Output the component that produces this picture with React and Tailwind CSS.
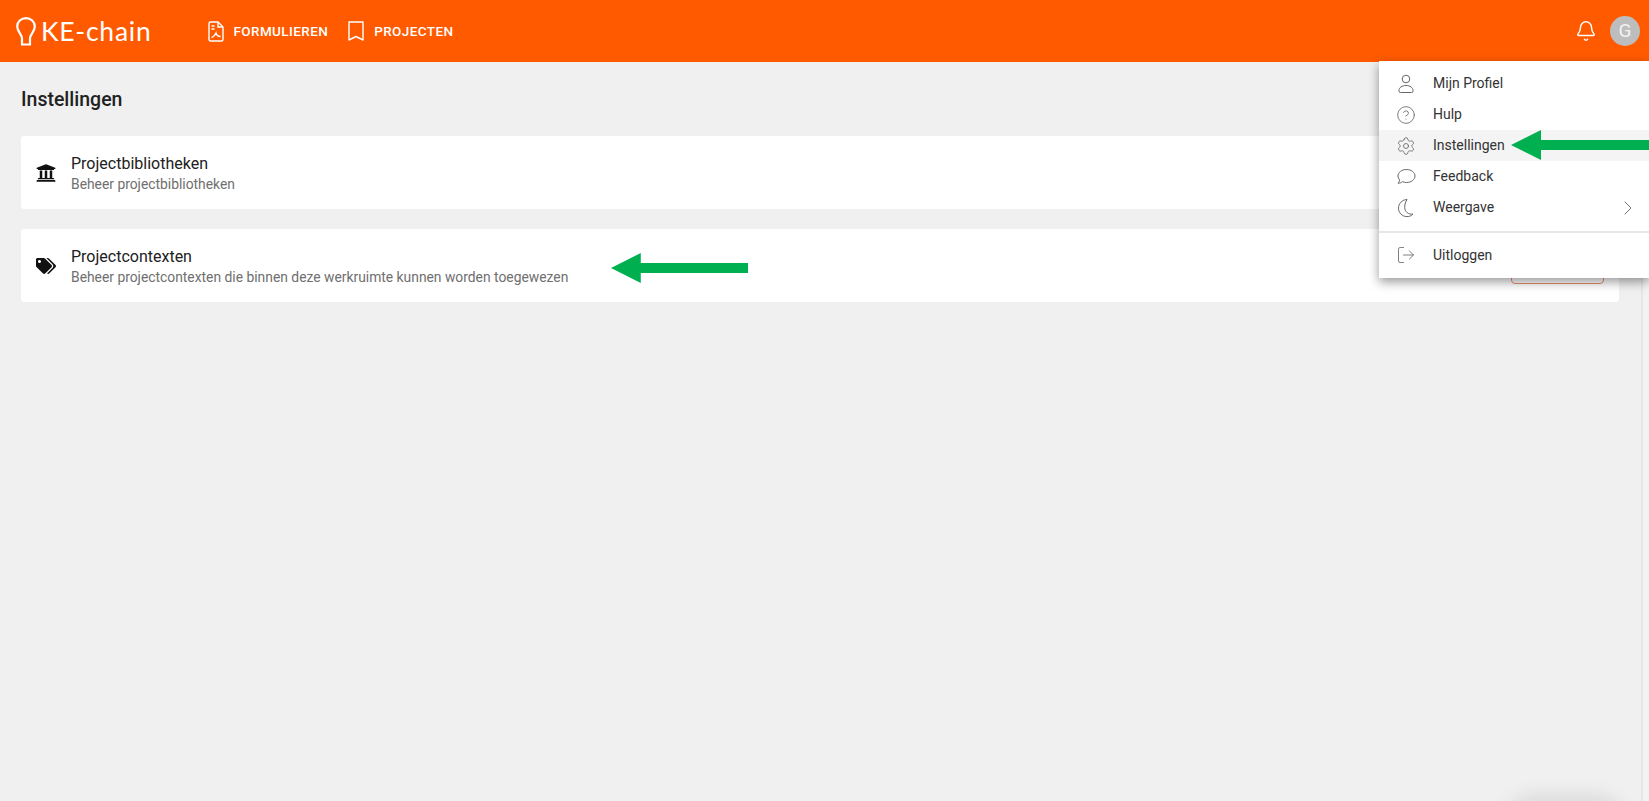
import { Bell, ChevronRight, CircleHelp, LogOut, Settings } from "lucide-react";
import { FaTags, FaUniversity } from "react-icons/fa";

function UserIcon({ className }) {
  return (
    <svg viewBox="0 0 20 20" fill="none" stroke="currentColor" strokeWidth="1" className={className}>
      <circle cx="10" cy="5" r="3.800" />
      <path d="M3 16.500c0-3 3-5 7-5s7 2 7 5v.5a1.500 1.500 0 0 1-1.500 1.500h-11A1.500 1.500 0 0 1 3 17z" />
    </svg>
  );
}

function BubbleIcon({ className }) {
  return (
    <svg viewBox="0 0 20 20" fill="none" stroke="currentColor" strokeWidth="1" className={className}>
      <path d="M10.500 2.500c4.700 0 8.500 2.900 8.500 6.500s-3.800 6.500-8.500 6.500c-1.500 0-2.900-.3-4-.8-1 .9-2.500 1.500-4.500 1.500 1-1 1.500-2 1.700-3.100C2.800 11.900 2 10.500 2 9c0-3.600 3.800-6.500 8.500-6.500z" />
    </svg>
  );
}

function MoonIcon({ className }) {
  return (
    <svg viewBox="0 0 20 20" fill="none" stroke="currentColor" strokeWidth="1" className={className}>
      <path d="M11 1.500C6.200 1.700 2.500 5.500 2.500 10.200s3.800 8.400 8.500 8.400c2.400 0 4.500-.9 6-2.500-4.500.6-8.300-2.300-8.300-6.800 0-3.100 1-5.800 2.300-7.800z" />
    </svg>
  );
}

const menuItems = [
  { label: "Mijn Profiel", icon: UserIcon },
  { label: "Hulp", icon: CircleHelp },
  { label: "Instellingen", icon: Settings, active: true },
  { label: "Feedback", icon: BubbleIcon },
  { label: "Weergave", icon: MoonIcon, chevron: true },
];

function Logo() {
  return (
    <div className="flex items-center text-white">
      <svg width="20" height="29" viewBox="0 0 20 29" fill="none" stroke="currentColor" strokeWidth="2.2" className="mr-[5px]">
        <path d="M6 27.500h8v-6c0-2 1-3.500 2.300-5.500 1.300-2 2.500-3.800 2.500-6.700C18.800 4.500 14.900 1.200 10 1.200S1.200 4.500 1.200 9.300c0 2.900 1.200 4.700 2.500 6.700C5 18 6 19.500 6 21.500z" />
      </svg>
      <span className="font-['Lato',sans-serif] text-[26.500px] leading-none tracking-[0.75px]">KE-chain</span>
    </div>
  );
}

function PdfIcon() {
  return (
    <svg width="16" height="21" viewBox="0 0 16 21" fill="none" stroke="currentColor" strokeWidth="1.400">
      <path d="M2.500 1h7.500l5 5v12.500a1.500 1.500 0 0 1-1.500 1.500h-11a1.500 1.500 0 0 1-1.500-1.500v-16a1.500 1.500 0 0 1 1.500-1.500z" />
      <path d="M10 1v5h5M3.500 5h3M3.500 8h3M3.500 16.500c2.500-.5 3.500-2.500 4.500-4.500.5 2 2 3.500 4.500 3.500" />
    </svg>
  );
}

function BookmarkIcon() {
  return (
    <svg width="16" height="20" viewBox="0 0 16 20" fill="none" stroke="currentColor" strokeWidth="1.400">
      <path d="M1 1h14v18l-7-3.500L1 19z" strokeLinejoin="round" />
    </svg>
  );
}

function SettingCard({ icon: Icon, title, text }) {
  return (
    <div className="flex h-[73px] items-center rounded-[3px] bg-white pl-[15px] pr-[15px]">
      <div className="flex w-[35px] shrink-0 items-center">
        <Icon className="h-[20px] w-[20px] text-[#111111]" />
      </div>
      <div className="min-w-0 flex-1">
        <div className="text-[16px] leading-[22px] text-[#212121]">{title}</div>
        <div className="text-[13.850px] leading-[18px] text-[#6f6f6f]">{text}</div>
      </div>
      <div className="h-[36px] w-[93px] shrink-0 rounded-[4px] border border-[#e8906a]" />
    </div>
  );
}

function GreenArrow({ className }) {
  return (
    <svg viewBox="0 0 138 30" className={className} preserveAspectRatio="none">
      <path d="M0 15 30 0v10h108v10H30v10z" fill="#00b050" />
    </svg>
  );
}

function UserMenu() {
  return (
    <div className="absolute left-[1379px] top-[61px] w-[270px] bg-white py-[7px] shadow-[0_4px_10px_rgba(0,0,0,0.4)]">
      {menuItems.map(({ label, icon: Icon, active, chevron }) => (
        <div key={label} className={`flex h-[31px] items-center pl-[17px] pr-[9px] ${active ? "bg-[#f4f4f4]" : ""}`}>
          <Icon className="h-[20px] w-[20px] text-[#666666]" strokeWidth={1} />
          <span className="ml-[17px] flex-1 text-[14px] text-[#333333]">{label}</span>
          {chevron && <ChevronRight className="h-[24px] w-[24px] text-[#777777]" strokeWidth={1} />}
        </div>
      ))}
      <div className="mt-[8px] h-[1.500px] bg-[#e6e6e6]" />
      <div className="mt-[7px] flex h-[31px] items-center pl-[17px]">
        <LogOut className="h-[20px] w-[20px] text-[#666666]" strokeWidth={1} />
        <span className="ml-[17px] text-[14px] text-[#333333]">Uitloggen</span>
      </div>
    </div>
  );
}

export default function App() {
  return (
    <div className="relative flex h-[801px] w-full flex-col overflow-hidden bg-[#f0f0f0] font-['Roboto',sans-serif]">
      <header className="flex h-[62px] shrink-0 items-center bg-[#ff5a00] pl-[16px] pr-[9px] text-white">
        <Logo />
        <nav className="ml-[57px] flex items-center gap-[20px]">
          <div className="flex items-center gap-[9px]">
            <PdfIcon />
            <span className="text-[13.500px] font-medium tracking-[0.4px]">FORMULIEREN</span>
          </div>
          <div className="flex items-center gap-[10px]">
            <BookmarkIcon />
            <span className="text-[13.500px] font-medium tracking-[0.4px]">PROJECTEN</span>
          </div>
        </nav>
        <div className="ml-auto flex items-center gap-[13px]">
          <Bell className="h-[22px] w-[22px]" strokeWidth={1.6} />
          <div className="flex h-[30px] w-[30px] items-center justify-center rounded-full bg-[#bdbdbd] text-[19px] text-[#f2f2f2]">G</div>
        </div>
      </header>

      <div className="flex min-h-0 flex-1">
        <main className="min-w-0 flex-1 pl-[21px] pr-[22px]">
          <h1 className="mt-[26px] text-[19.500px] font-medium leading-[24px] text-[#212121]">Instellingen</h1>
          <div className="mt-[24px] flex flex-col gap-[20px]">
            <SettingCard icon={FaUniversity} title="Projectbibliotheken" text="Beheer projectbibliotheken" />
            <SettingCard icon={FaTags} title="Projectcontexten" text="Beheer projectcontexten die binnen deze werkruimte kunnen worden toegewezen" />
          </div>
        </main>
        <div className="w-[8px] shrink-0 border-l-2 border-[#e6e6e6] bg-[#f2f2f2]" />
      </div>

      <UserMenu />
      <div className="absolute left-[1515px] top-[806px] h-[40px] w-[100px] rounded-full bg-[#d8d8d8] shadow-[0_0_20px_10px_rgba(0,0,0,0.1)]" />
      <GreenArrow className="absolute left-[611px] top-[253px] h-[30px] w-[137px]" />
      <GreenArrow className="absolute left-[1511px] top-[130px] h-[30px] w-[138px]" />
    </div>
  );
}
